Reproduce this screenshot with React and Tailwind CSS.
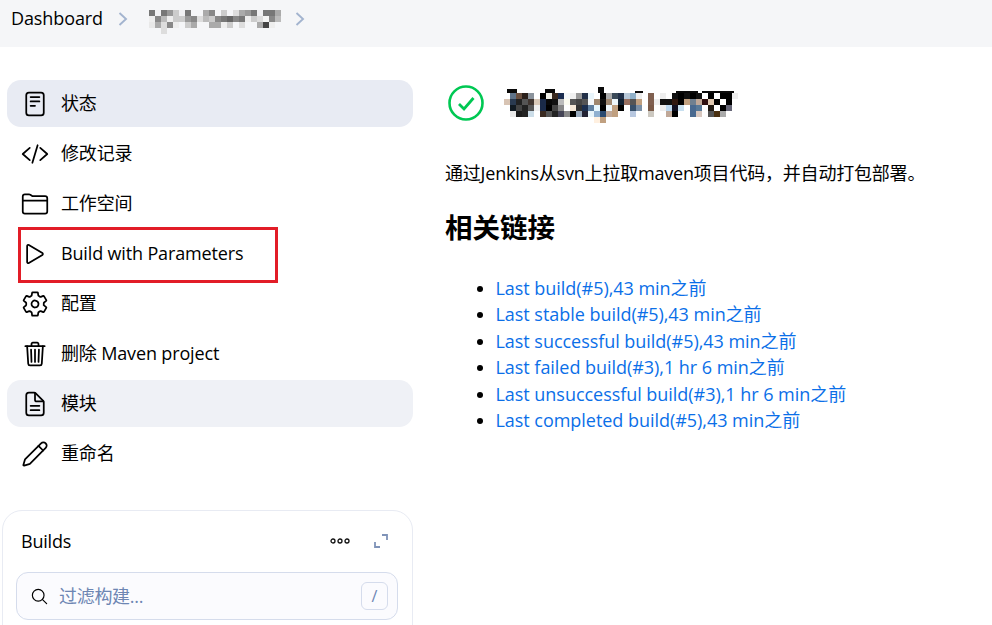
import {
  IoReaderOutline,
  IoCodeSlashOutline,
  IoFolderOutline,
  IoPlayOutline,
  IoSettingsOutline,
  IoTrashOutline,
  IoDocumentTextOutline,
  IoSearchOutline,
} from "react-icons/io5";
import { Pencil } from "lucide-react";

const PencilIcon = (props) => <Pencil {...props} strokeWidth={1.5} />;

const navItems = [
  { label: "状态", icon: IoReaderOutline, bg: "bg-[#e8ebf3]" },
  { label: "修改记录", icon: IoCodeSlashOutline },
  { label: "工作空间", icon: IoFolderOutline },
  { label: "Build with Parameters", icon: IoPlayOutline, marked: true },
  { label: "配置", icon: IoSettingsOutline },
  { label: "删除 Maven project", icon: IoTrashOutline },
  { label: "模块", icon: IoDocumentTextOutline, bg: "bg-[#eff1f6]" },
  { label: "重命名", icon: PencilIcon },
];

const links = [
  "Last build(#5),43 min之前",
  "Last stable build(#5),43 min之前",
  "Last successful build(#5),43 min之前",
  "Last failed build(#3),1 hr 6 min之前",
  "Last unsuccessful build(#3),1 hr 6 min之前",
  "Last completed build(#5),43 min之前",
];

// pixelated name in the breadcrumb, 6px cells
const crumbMosaic = [
  ["777", "f2f2f4", "777", "999", "ccc", "f0f0f2", "777", "", "", "aaa", "888", "", "ccc", "", "ddd", "aaa", "999", "777", "f0f0f2", "777", "777", "aaa"],
  ["eee", "888", "bbb", "eee", "ccc", "ccc", "999", "888", "ddd", "bbb", "ccc", "888", "777", "666", "888", "777", "eee", "ccc", "ddd", "f5f5f5", "888", "bbb"],
  ["e8e8e8", "aaa", "ddd", "888", "eee", "", "ccc", "aaa", "", "", "aaa", "aaa", "eee", "ccc", "", "ddd", "", "", "aaa", "444", "eee", ""],
  ["", "", "ddd"],
];

// pixelated job title, 6px cells
const titleMosaic = [
  [],
  ["", "5f7389", "6b5040", "2a1f1a", "8b939c", "", "000", "f0f0e8", "3a2a20", "1a2c50", "f5f8fa", "f0f0f0", "999", "223048", "e8f4fa", "", "000", "aaa", "3b4a58", "223048", "b8c8d8", "90b0c8", "eee", "", "806050", "", "eee", "", "111", "000", "111", "000", "111", "", "000", "", "000", "000", "eee"],
  ["d8c4b4", "2a3a50", "222", "555", "403530", "d8c8b8", "1a2a48", "080808", "111", "bbb", "fbfbf0", "555", "444", "555", "f5f8fa", "a08870", "111", "a08870", "eef6fa", "112233", "987060", "555", "c0a080", "", "806050", "eee", "111", "111", "301810", "000", "c0a080", "708090", "c0a898", "301010", "e0c8b0", "000", "", "000", "fff"],
  ["", "111a22", "444", "222", "555", "eee", "1a2a48", "000", "444", "888", "", "f5e8d8", "333", "1c3050", "6080a0", "e8f8ff", "000", "f0f8fc", "c0a080", "000", "", "37506a", "7a8fa5", "", "7a5a48", "", "eee", "bcd8f0", "112", "c8e0f0", "", "4a6a90", "5a7a98", "", "201810", "", "000", "667"],
  ["", "e8e8e8", "1a1a1a", "222", "ccdde8", "", "3a2a20", "555", "222", "445", "888", "000", "99aabc", "223", "e8f4fa", "90b0d0", "2a4a70", "c0a898", "c0a080", "", "", "b8c8e0", "", "", "ccc8c0", "", "", "c0a898", "000", "", "", "4a6a90", "d8c8c0", "", "555", "4a3010", "aaa"],
  ["", "", "", "", "", "", "", "", "", "", "", "", "", "", "", "fff0e0", "c0a080"],
];

// letter edges that stick out of the mosaic: x, y, w, h
const titleEdges = [
  [3, 2, 10, 4],
  [41, 2, 10, 4],
  [94, 0, 6, 6],
  [131, 4, 8, 2],
  [172, 4, 22, 2],
  [198, 4, 32, 2],
];

function Mosaic({ rows, className, children }) {
  const width = Math.max(...rows.map((row) => row.length)) * 6;
  return (
    <svg className={className} width={width} height={rows.length * 6}>
      {rows.map((row, y) =>
        row.map((color, x) =>
          color ? (
            <rect key={x + "-" + y} x={x * 6} y={y * 6} width="6" height="6" fill={"#" + color} />
          ) : null,
        ),
      )}
      {children}
    </svg>
  );
}

function Chevron() {
  return (
    <svg width="10" height="14" viewBox="0 0 10 14" fill="none" stroke="#a3b4cf" strokeWidth="1.9">
      <path d="M1.5 1 8 7l-6.5 6" />
    </svg>
  );
}

export default function App() {
  return (
    <div className="h-[625px] w-[992px] overflow-hidden bg-white font-['Open_Sans','Noto_Sans_CJK_SC',sans-serif] text-[18px] text-black">
      <div className="flex h-[47px] items-center bg-[#f5f6f8] pb-[10px] pl-[11px]">
        <span className="tracking-[-0.1px]">Dashboard</span>
        <span className="ml-[15px]">
          <Chevron />
        </span>
        <Mosaic rows={crumbMosaic} className="ml-[21px] mt-[7px]" />
        <span className="ml-[14px]">
          <Chevron />
        </span>
      </div>

      <div className="flex">
        <div className="w-[413px] shrink-0">
          <nav className="flex flex-col gap-[3px] pl-[7px] pt-[33px]">
            {navItems.map((item) => (
              <div
                key={item.label}
                className={`relative flex h-[47px] items-center rounded-[14px] pl-[14px] ${item.bg || ""}`}
              >
                <item.icon className="h-[28px] w-[28px] shrink-0" />
                <span className="ml-[12px] tracking-[-0.15px]">{item.label}</span>
                {item.marked && (
                  <div className="absolute left-[11px] top-[-3px] h-[56px] w-[260px] border-[3px] border-[#e21d27]" />
                )}
              </div>
            ))}
          </nav>

          <div className="ml-[2px] mt-[33px] h-[140px] rounded-[20px] border border-[#e8ebf3] pl-[13px] pr-[14px] pt-[16px]">
            <div className="flex h-[28px] items-center justify-between pl-[5px] pr-[9px]">
              <span className="tracking-[-0.2px]">Builds</span>
              <div className="flex items-center gap-[23px]">
                <svg width="20" height="8" viewBox="0 0 20 8" fill="none" stroke="#111" strokeWidth="1.3">
                  <circle cx="3" cy="4" r="2" />
                  <circle cx="10" cy="4" r="2" />
                  <circle cx="17" cy="4" r="2" />
                </svg>
                <svg width="16" height="16" viewBox="0 0 16 16" fill="none" stroke="#7f93b8" strokeWidth="1.8">
                  <path d="M9 2h5v5M7 14H2V9" />
                </svg>
              </div>
            </div>
            <div className="mt-[17px] flex h-[48px] items-center rounded-[12px] border border-[#d5dcec] bg-[#fbfbfe] pl-[13px] pr-[9px]">
              <IoSearchOutline className="h-[19px] w-[19px] shrink-0" />
              <span className="ml-[10px] tracking-[-0.3px] text-[#6d86b3]">过滤构建...</span>
              <span className="ml-auto flex h-[28px] w-[27px] items-center justify-center rounded-[6px] border border-[#d5dcec] text-[16px] text-[#6d86b3]">
                /
              </span>
            </div>
          </div>
        </div>

        <main className="flex-1 pl-[32px]">
          <div className="mt-[36px] flex h-[40px] items-center pl-[3px]">
            <svg width="36" height="36" viewBox="0 0 36 36" fill="none" stroke="#00c853">
              <circle cx="18" cy="18" r="16.5" strokeWidth="2.6" />
              <path d="m11 19 5 5 9.5-11" strokeWidth="2.8" />
            </svg>
            <Mosaic rows={titleMosaic} className="ml-[20px] mt-[4px]">
              {titleEdges.map(([x, y, w, h]) => (
                <rect key={x} x={x} y={y} width={w} height={h} fill="#0a0a0a" />
              ))}
            </Mosaic>
          </div>
          <p className="mt-[38px] leading-[25px] tracking-[-0.2px]">通过Jenkins从svn上拉取maven项目代码，并自动打包部署。</p>
          <h2 className="mt-[24px] text-[27.5px] leading-[36px] font-bold">相关链接</h2>
          <ul className="mt-[29px] list-disc pl-[50.5px] leading-[26.4px] tracking-[-0.04px] text-[#0b6fe8]">
            {links.map((link) => (
              <li key={link} className="marker:text-black">
                {link}
              </li>
            ))}
          </ul>
        </main>
      </div>
    </div>
  );
}
